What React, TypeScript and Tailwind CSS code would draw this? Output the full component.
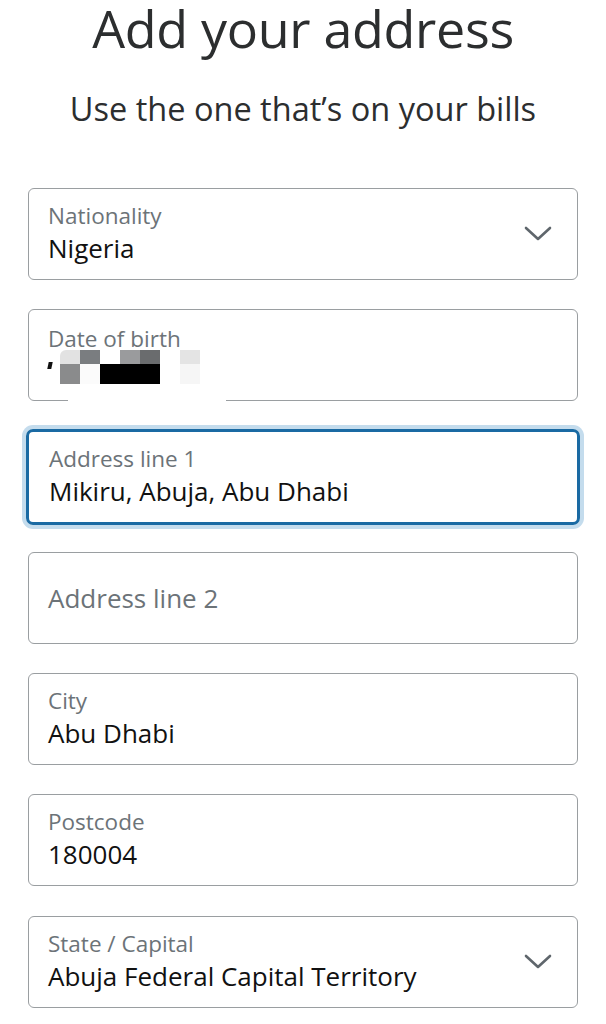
import React from "react";

const font = { fontFamily: '"Open Sans", "Noto Sans", sans-serif' };

function Chevron() {
  return (
    <svg width="28" height="16" viewBox="0 0 28 16" className="shrink-0">
      <path d="M2 2 L14 13 L26 2" fill="none" stroke="#5f666c" strokeWidth="2.6" strokeLinecap="round" strokeLinejoin="round" />
    </svg>
  );
}

function Field({ label, value, select, focused }: { label: string; value?: string; select?: boolean; focused?: boolean }) {
  return (
    <div
      className={
        focused
          ? "h-[96px] -mx-[2px] -my-[2px] rounded-[7px] border-[3px] border-[#1a6aa3] shadow-[0_0_0_4px_#c4dced] pl-[20px] pr-[26px] flex items-center"
          : "h-[92px] rounded-[6px] border-[1.5px] border-[#9a9ea1] pl-[19px] pr-[25px] flex items-center"
      }
    >
      <div className="flex-1 flex flex-col">
        {value !== undefined ? (
          <>
            <div className="text-[22.5px] leading-[28px] text-[#6c7378]">{label}</div>
            <div className="text-[26px] leading-[36px] text-[#111]">{value}</div>
          </>
        ) : (
          <div className="text-[26px] leading-[36px] text-[#6c7378]">{label}</div>
        )}
      </div>
      {select && <Chevron />}
    </div>
  );
}

const row1 = ["#e2e2e2", "#7a7d80", "#ffffff", "#9a9b9d", "#6a6c6e", "#ffffff", "#e4e4e4"];

function DobField() {
  return (
    <div className="relative h-[92px] rounded-[6px] border-[1.5px] border-[#9a9ea1] pl-[19px] pr-[25px] flex flex-col justify-center">
      <div className="text-[22.5px] leading-[28px] text-[#6c7378]">Date of birth</div>
      <div className="h-[36px] flex items-start -mt-[3px]">
        <div className="w-[4px] h-[7px] mt-[12px] bg-[#111] -skew-x-12" />
        <div className="ml-[8px] flex flex-col">
          <div className="flex h-[14px]">
            {row1.map((c, i) => (
              <div key={i} className={i === 0 ? "w-[20px] rounded-tl-[6px]" : "w-[20px]"} style={{ backgroundColor: c }} />
            ))}
          </div>
          <div className="flex h-[20px]">
            <div className="w-[20px] bg-[#8a8b8c]" />
            <div className="w-[20px] bg-[#fbfbfb]" />
            <div className="w-[60px] bg-black" />
            <div className="w-[20px] bg-white" />
            <div className="w-[20px] bg-[#f6f6f6]" />
          </div>
        </div>
      </div>
      {/* white strip over bottom border (redaction) */}
      <div className="absolute left-[39px] bottom-[-3px] w-[158px] h-[5px] bg-white" />
    </div>
  );
}

export default function App() {
  return (
    <div className="w-[606px] h-[1024px] bg-white overflow-hidden" style={font}>
      <div className="text-center text-[#2c2e2f]">
        <h1 className="text-[52px] leading-[56px] font-normal tracking-[-0.3px]">Add your address</h1>
        <p className="mt-[32px] text-[32.5px] leading-[42px]">Use the one that’s on your bills</p>
      </div>
      <div className="mt-[58px] px-[28px] flex flex-col gap-[29.3px]">
        <Field label="Nationality" value="Nigeria" select />
        <DobField />
        <Field label="Address line 1" value="Mikiru, Abuja, Abu Dhabi" focused />
        <Field label="Address line 2" />
        <Field label="City" value="Abu Dhabi" />
        <Field label="Postcode" value="180004" />
        <Field label="State / Capital" value="Abuja Federal Capital Territory" select />
      </div>
    </div>
  );
}
